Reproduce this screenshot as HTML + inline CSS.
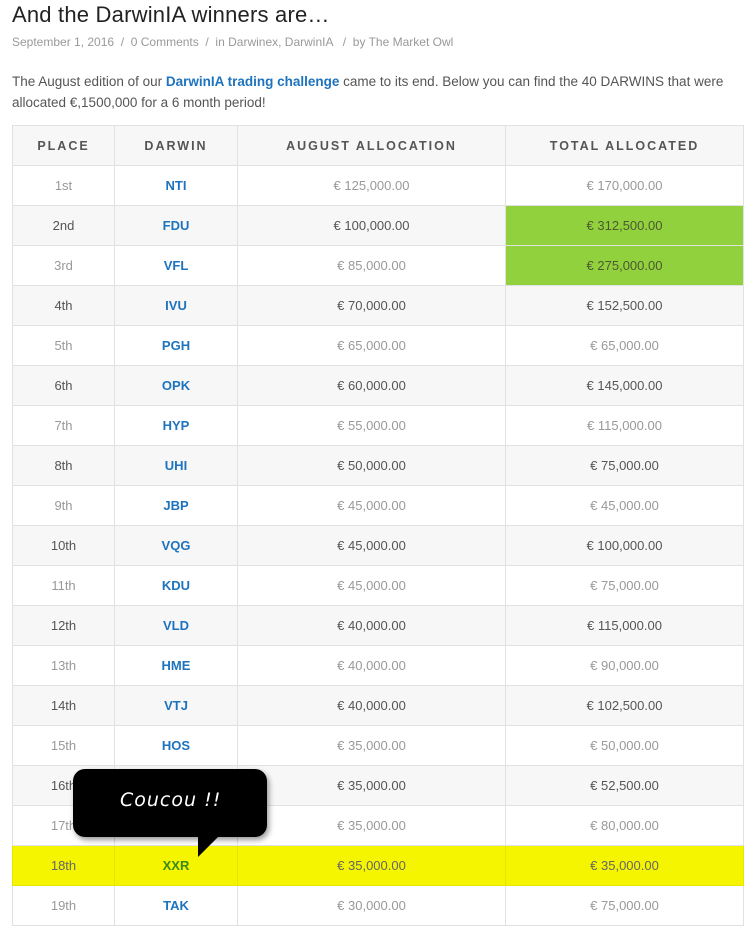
<!DOCTYPE html>
<html><head><meta charset="utf-8"><style>
body{margin:0;background:#fff;font-family:"Liberation Sans",sans-serif;width:755px;height:911px;overflow:hidden;position:relative}
h1{position:absolute;left:12px;top:0;margin:0;font-size:22px;font-weight:normal;color:#222;line-height:30px;letter-spacing:0.2px}
.meta{position:absolute;left:12px;top:35px;font-size:12px;color:#999}
.p{position:absolute;left:12px;top:71px;width:735px;font-size:13.5px;line-height:21px;color:#555}
.p a{color:#1e73be;font-weight:bold;text-decoration:none}
table{position:absolute;left:12px;top:125px;border-collapse:collapse;width:731px;table-layout:fixed}
td,th{border:1px solid #e1e1e1;height:39px;text-align:center;font-size:13px;padding:0}
th{background:#f7f7f7;color:#555;font-weight:bold;letter-spacing:2px;font-size:12.5px}
tr:nth-child(even) td{background:#fff;color:#999}
tr:nth-child(odd) td{background:#f7f7f7;color:#555}
td.d{color:#1e73be!important;font-weight:bold}
tr td.g{background:#92d13e!important;color:#4a5a30!important}
tr.y td{background:#f5f500!important;color:#666!important;border-color:#e6e600}
tr.y td.d{color:#3a8a1a!important}
.bub{position:absolute;left:73px;top:769px;width:194px;height:68px;background:#000;border-radius:12px;box-shadow:2px 3px 6px rgba(0,0,0,.4)}
.tail{position:absolute;left:198px;top:836px;width:0;height:0;border-right:21px solid transparent;border-top:21px solid #000}
.bt{position:absolute;left:120px;top:789px;color:#fff;font-family:"DejaVu Sans",sans-serif;font-style:italic;font-size:19px;letter-spacing:1px}
</style></head><body>
<h1>And the DarwinIA winners are…</h1>
<div class="meta">September 1, 2016 &nbsp;/&nbsp; 0 Comments &nbsp;/&nbsp; in Darwinex, DarwinIA &nbsp; / &nbsp;by The Market Owl</div>
<div class="p">The August edition of our <a>DarwinIA trading challenge</a> came to its end. Below you can find the 40 DARWINS that were allocated €,1500,000 for a 6 month period!</div>
<table>
<colgroup><col style="width:102px"><col style="width:123px"><col style="width:268px"><col style="width:238px"></colgroup>
<tr><th>PLACE</th><th>DARWIN</th><th>AUGUST ALLOCATION</th><th>TOTAL ALLOCATED</th></tr>
<tr><td>1st</td><td class="d">NTI</td><td>€ 125,000.00</td><td>€ 170,000.00</td></tr>
<tr><td>2nd</td><td class="d">FDU</td><td>€ 100,000.00</td><td class="g">€ 312,500.00</td></tr>
<tr><td>3rd</td><td class="d">VFL</td><td>€ 85,000.00</td><td class="g">€ 275,000.00</td></tr>
<tr><td>4th</td><td class="d">IVU</td><td>€ 70,000.00</td><td>€ 152,500.00</td></tr>
<tr><td>5th</td><td class="d">PGH</td><td>€ 65,000.00</td><td>€ 65,000.00</td></tr>
<tr><td>6th</td><td class="d">OPK</td><td>€ 60,000.00</td><td>€ 145,000.00</td></tr>
<tr><td>7th</td><td class="d">HYP</td><td>€ 55,000.00</td><td>€ 115,000.00</td></tr>
<tr><td>8th</td><td class="d">UHI</td><td>€ 50,000.00</td><td>€ 75,000.00</td></tr>
<tr><td>9th</td><td class="d">JBP</td><td>€ 45,000.00</td><td>€ 45,000.00</td></tr>
<tr><td>10th</td><td class="d">VQG</td><td>€ 45,000.00</td><td>€ 100,000.00</td></tr>
<tr><td>11th</td><td class="d">KDU</td><td>€ 45,000.00</td><td>€ 75,000.00</td></tr>
<tr><td>12th</td><td class="d">VLD</td><td>€ 40,000.00</td><td>€ 115,000.00</td></tr>
<tr><td>13th</td><td class="d">HME</td><td>€ 40,000.00</td><td>€ 90,000.00</td></tr>
<tr><td>14th</td><td class="d">VTJ</td><td>€ 40,000.00</td><td>€ 102,500.00</td></tr>
<tr><td>15th</td><td class="d">HOS</td><td>€ 35,000.00</td><td>€ 50,000.00</td></tr>
<tr><td>16th</td><td class="d">XXX</td><td>€ 35,000.00</td><td>€ 52,500.00</td></tr>
<tr><td>17th</td><td class="d">XXX</td><td>€ 35,000.00</td><td>€ 80,000.00</td></tr>
<tr class="y"><td>18th</td><td class="d">XXR</td><td>€ 35,000.00</td><td>€ 35,000.00</td></tr>
<tr><td>19th</td><td class="d">TAK</td><td>€ 30,000.00</td><td>€ 75,000.00</td></tr>
</table>
<div class="bub"></div><div class="tail"></div>
<div class="bt">Coucou !!</div>
</body></html>
